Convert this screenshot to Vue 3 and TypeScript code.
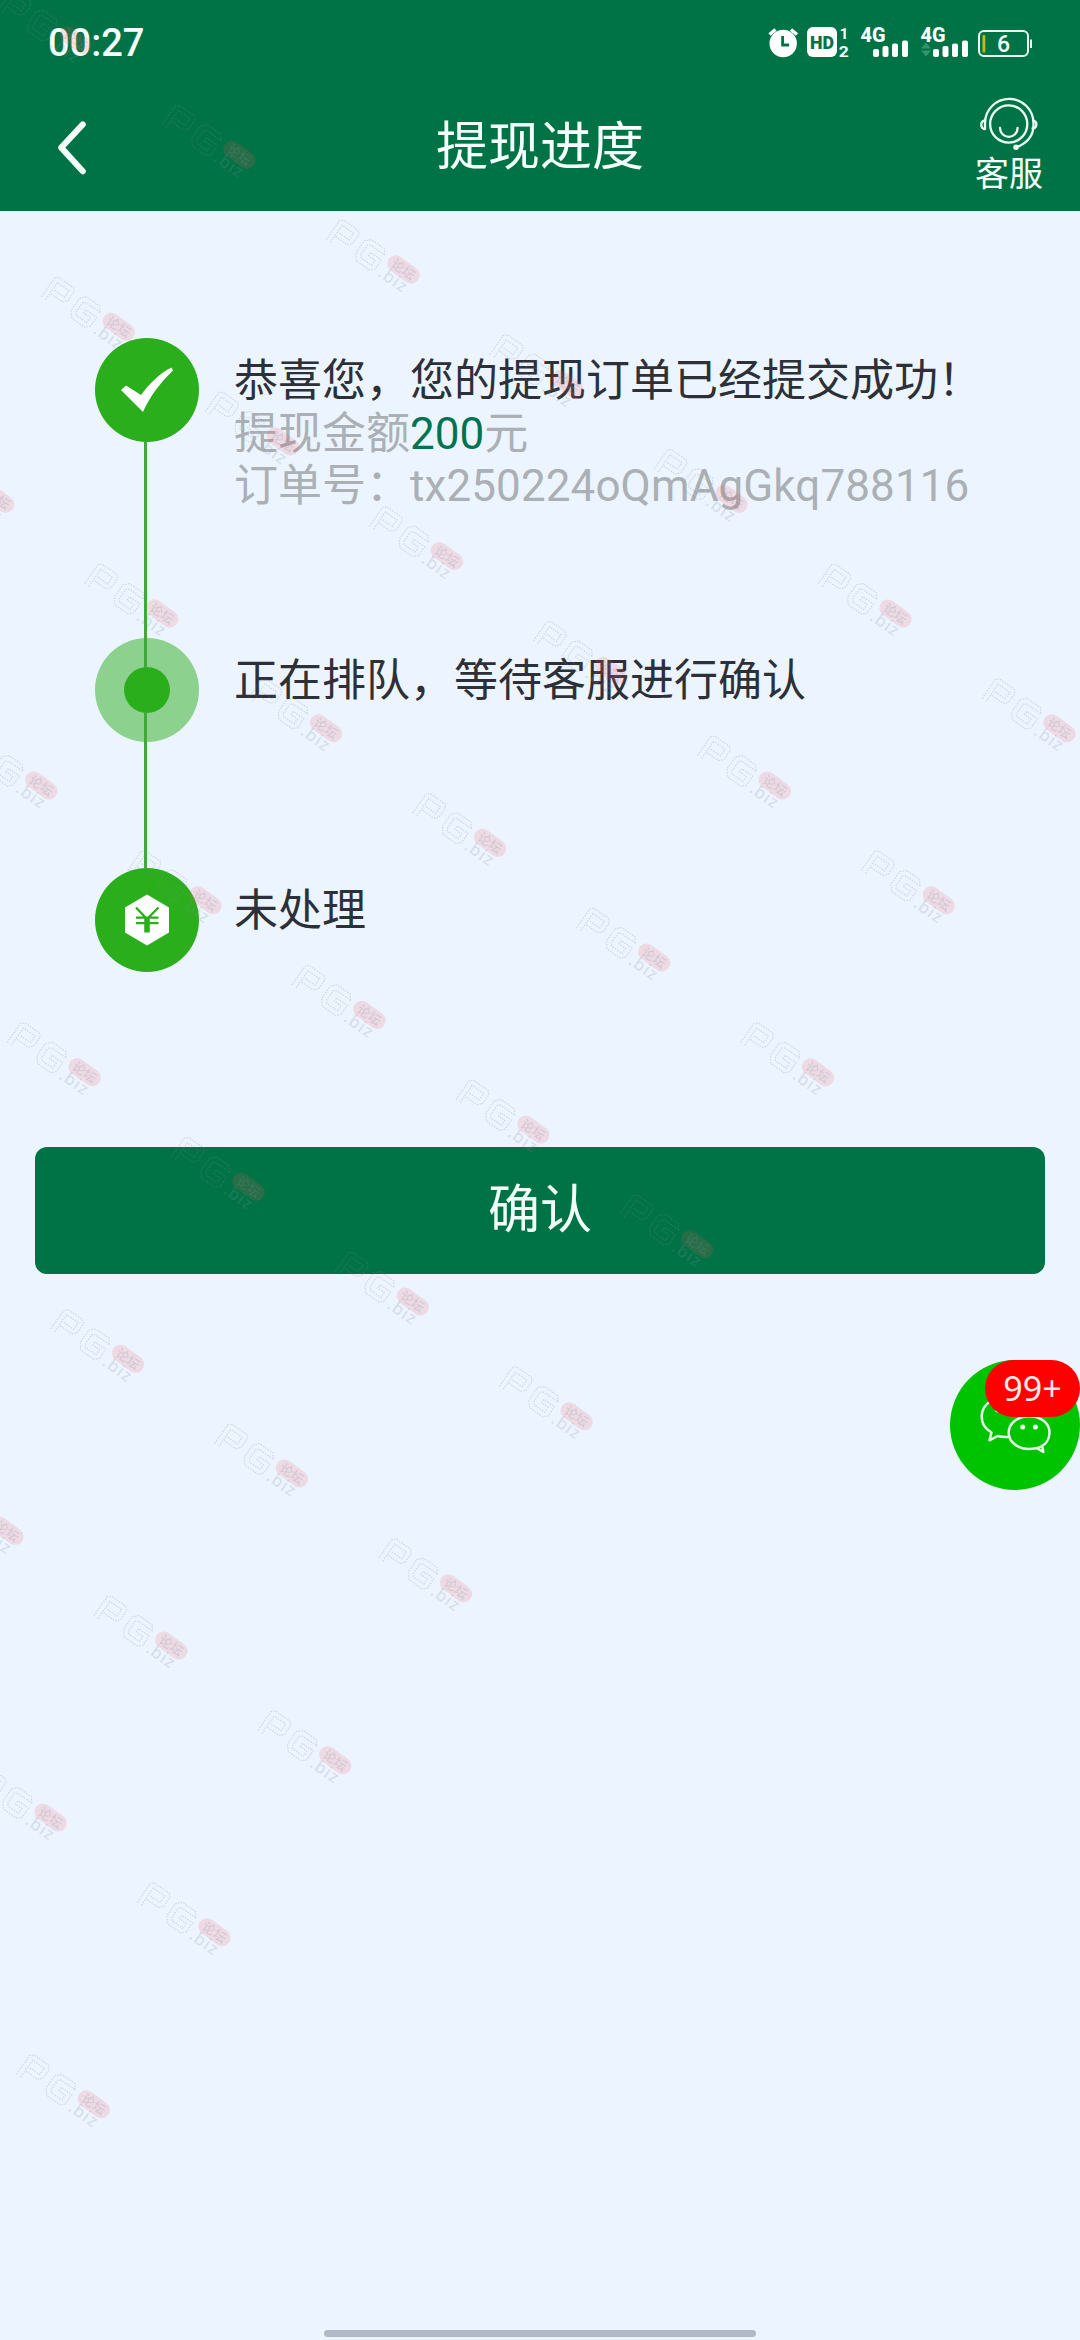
<script setup lang="ts">
interface Mark { x: number; y: number }

const title = '提现进度'
const amount = '200'
const orderNo = 'tx250224oQmAgGkq788116'
const signalBars = [
  { x: 0, h: 8 },
  { x: 9.5, h: 11 },
  { x: 19, h: 13.5 },
  { x: 29, h: 16.5 },
]

// Each row of the diagonal watermark: first and last column index
const rows: [number, number][] = [
  [0, 6], [0, 5], [-1, 4], [-1, 3], [-1, 2], [-1, 1], [-2, 0], [-2, -1], [-2, -2],
]
const marks: Mark[] = rows.flatMap(([from, to], j) =>
  Array.from({ length: to - from + 1 }, (_, k) => ({
    x: 13.8 + (from + k) * 164 + j * 43.3,
    y: -10.5 + (from + k) * 114.7 + j * 286.7,
  })),
)
</script>

<template>
  <div class="page">
    <header class="header">
      <div class="status">
        <span class="clock">00:27</span>
        <svg class="status-icons" width="270" height="36" viewBox="766 25 270 36">
          <g fill="#fff">
            <circle cx="783.2" cy="43.5" r="13.7" />
            <path d="M769.5 34.5l6-5M791 29.5l6 5" stroke="#fff" stroke-width="3.4" />
            <path d="M782.6 36v9h6.5" fill="none" stroke="#007346" stroke-width="2.8" />
            <rect x="807" y="27" width="30" height="30" rx="6" />
            <text x="822" y="49" class="hd" text-anchor="middle" textLength="24" lengthAdjust="spacingAndGlyphs">HD</text>
            <text x="844" y="38.5" class="sim" text-anchor="middle">1</text>
            <text x="843.7" y="56.5" class="sim" text-anchor="middle" textLength="10" lengthAdjust="spacingAndGlyphs">2</text>
            <g v-for="n in [0, 60]" :key="n" :transform="`translate(${n} 0)`">
              <text x="860.5" y="41.5" class="net" textLength="25" lengthAdjust="spacingAndGlyphs">4G</text>
              <rect v-for="b in signalBars" :key="b.x" :x="873 + b.x" :y="57 - b.h" width="6" :height="b.h" rx="2" />
            </g>
          </g>
          <path d="M921 48.5l5-6 5 6zM921 50.5l5 6 5-6z" fill="#31946a" />
          <rect x="979" y="31" width="49" height="25" rx="5" fill="none" stroke="#e8fff2" stroke-width="2" />
          <path d="M1031 39.5v8.5" stroke="#e8fff2" stroke-width="2" />
          <rect x="982.5" y="35" width="2.8" height="17.5" rx="1" fill="#c9b70a" />
          <text x="1003.5" y="52" class="battery" text-anchor="middle">6</text>
        </svg>
      </div>
      <nav class="nav">
        <svg class="back" width="36" height="60" viewBox="0 0 36 60">
          <path d="M28.8 6.4L7.2 29.6 28.8 53.2" fill="none" stroke="#f4fff9" stroke-width="6" stroke-linecap="round" stroke-linejoin="round" />
        </svg>
        <h1 class="title">{{ title }}</h1>
        <div class="service">
          <svg width="60" height="56" viewBox="979 96 60 56" fill="none" stroke="#eafff5" stroke-width="2.3" stroke-linecap="round">
            <circle cx="1008.7" cy="124" r="18.6" />
            <path d="M1000 128a8.800 8.800 0 0 0 17.600 0" />
            <path d="M985 129V123a24.200 24 0 0 1 48.500 0v2c0 11-7 18.500-17.500 22.500" />
            <path d="M985 120.500c-5 0-5 8.500 0 8.500M1033.500 120.500c4 1 4 7.500-1 8" />
            <circle cx="1016" cy="147.300" r="1.600" fill="#eafff5" />
          </svg>
          <span>客服</span>
        </div>
      </nav>
    </header>

    <main>
      <ol class="steps">
        <li class="step submitted">
          <svg class="dot" width="104" height="104" viewBox="0 0 104 104">
            <circle cx="52" cy="52" r="52" fill="#2bae1c" />
            <path d="M26 52l5-4.500L46 57C54 46 65 35 76.500 29.500L78 32.500C66 44 55 58 48 74z" fill="#fff" />
          </svg>
          <div class="text">
            <p>恭喜您，您的提现订单已经提交成功！</p>
            <p class="muted">提现金额<b>{{ amount }}</b>元</p>
            <p class="muted">订单号：<span class="order">{{ orderNo }}</span></p>
          </div>
        </li>
        <li class="step queued">
          <svg class="dot" width="104" height="104" viewBox="0 0 104 104">
            <circle cx="52" cy="52" r="52" fill="#2bae1c" fill-opacity=".5" />
            <circle cx="52" cy="52" r="23" fill="#2bae1c" />
          </svg>
          <div class="text"><p>正在排队，等待客服进行确认</p></div>
        </li>
        <li class="step">
          <svg class="dot" width="104" height="104" viewBox="0 0 104 104">
            <circle cx="52" cy="52" r="52" fill="#2bae1c" />
            <path d="M52 26.500l22 13v25L52 77.500l-22-13v-25z" fill="#fff" />
            <path d="M41 39.500L52 51l11.500-11.500M41 49.600h22.500M41 55.200h22.500" fill="none" stroke="#2bae1c" stroke-width="2.300" />
            <path d="M52 50v14.500" stroke="#2bae1c" stroke-width="5.500" />
          </svg>
          <div class="text"><p>未处理</p></div>
        </li>
      </ol>
      <button class="confirm" type="button">确认</button>
    </main>

    <aside class="chat">
      <svg width="130" height="130" viewBox="0 0 130 130" fill="none" stroke="#e6ffe6" stroke-width="2.500" stroke-linejoin="round">
        <path d="M41 41C29 48 28 65 41.500 72.500L39.500 80.300 47.500 76Q53 77.500 60 76.800" />
        <path d="M85.500 88.500C97 86 99.500 78 99.500 72.500 99.500 63 90.500 56.300 79 56.300S58.700 63.500 58.700 72.700 68 89 79 89Q83 89 86.500 88L93.300 92 92 84.500" />
        <g fill="#e6ffe6" stroke="none">
          <circle cx="72.700" cy="67" r="2.500" />
          <circle cx="85.400" cy="67" r="2.500" />
          <circle cx="47.500" cy="50" r="2.500" />
        </g>
      </svg>
      <span class="badge">99+</span>
    </aside>

    <div class="home-bar"></div>

    <svg class="watermark" width="1080" height="2340" viewBox="0 0 1080 2340" aria-hidden="true">
      <g v-for="(m, i) in marks" :key="i" :transform="`translate(${m.x} ${m.y}) rotate(35)`">
        <g fill="none" stroke="#8a8a9a" stroke-opacity=".28" stroke-width="1.200" stroke-dasharray="1.600 1.200">
          <path d="M-1 26V3L2 0H20L23 3V14L19 18H5M4 26V5H18V13H5" />
          <path d="M56 5L52 0H36L31 5V20L36 26H52L56 22V11H43V15H51V21H38L36 18V7L39 5H56" />
        </g>
        <text x="61" y="26" class="wm-biz">.biz</text>
        <rect x="61.500" y="-2.500" width="36" height="17" rx="8.500" transform="rotate(1 79 6)" fill="#f0505a" fill-opacity=".16" />
        <text x="79.500" y="11" class="wm-forum" text-anchor="middle">论坛</text>
      </g>
    </svg>
  </div>
</template>

<style>
body {
  margin: 0;
  background: #ecf5ff;
}
</style>

<style scoped>
.page {
  position: relative;
  width: 1080px;
  height: 2340px;
  overflow: hidden;
  background: #ecf5ff;
  color: #2d3036;
  font-family: Roboto, "Noto Sans CJK SC", sans-serif;
}
.header {
  height: 211px;
  background: #007346;
  color: #f6fffb;
}
.status {
  display: flex;
  justify-content: space-between;
  box-sizing: border-box;
  height: 86px;
  padding: 25px 44px 0 48px;
}
.clock {
  font-size: 38px;
  font-weight: 500;
  line-height: 36px;
}
.hd {
  font: 900 19px Roboto, sans-serif;
  fill: #007346;
}
.sim {
  font: 700 15px Roboto, sans-serif;
}
.net {
  font: 800 19.5px Roboto, sans-serif;
}
.battery {
  font: 500 23px Roboto, sans-serif;
  fill: #f4fff9;
}
.nav {
  display: grid;
  grid-template-columns: 200px 1fr 200px;
  height: 125px;
}
.back {
  margin: 32px 0 0 54px;
}
.title {
  margin: 23px 0 0;
  font-size: 52px;
  font-weight: 400;
  line-height: 78px;
  text-align: center;
}
.service {
  display: flex;
  flex-direction: column;
  align-items: center;
  width: 80px;
  margin: 10px 0 0 89px;
  justify-self: start;
  font-size: 34px;
  line-height: 44px;
}
.service span {
  white-space: nowrap;
}
.steps {
  margin: 0;
  padding: 127px 0 0 95px;
  list-style: none;
}
.step {
  position: relative;
  display: flex;
  gap: 35px;
  height: 104px;
}
.submitted {
  height: 300px;
}
.queued {
  height: 230px;
}
.submitted::after,
.queued::after {
  content: "";
  position: absolute;
  z-index: 1;
  left: 48.5px;
  top: 103px;
  width: 3px;
  height: 227px;
  background: #41a83c;
}
.queued::after {
  top: 74px;
  height: 157px;
}
.dot {
  flex: none;
}
.text {
  padding-top: 17px;
  font-size: 44px;
  line-height: 52.5px;
  white-space: nowrap;
}
.text p {
  margin: 0;
}
.text .muted {
  color: #abb0b5;
}
.text b {
  color: #007350;
  font-weight: 400;
}
.order {
  letter-spacing: 0.1px;
}
.confirm {
  display: block;
  width: 1010px;
  height: 127px;
  margin: 175px auto 0;
  padding: 0;
  border: 0;
  border-radius: 12px;
  background: #007346;
  color: #f2fff9;
  font: 400 52px/1 Roboto, "Noto Sans CJK SC", sans-serif;
}
.chat {
  position: absolute;
  top: 1360px;
  right: 0;
  width: 130px;
  height: 130px;
  border-radius: 50%;
  background: #00c300;
}
.badge {
  position: absolute;
  top: 0;
  right: 0;
  width: 95px;
  height: 57px;
  border-radius: 29px;
  background: #f00;
  color: #ffeaea;
  font: 400 34px/56px "Noto Sans", sans-serif;
  text-align: center;
}
.home-bar {
  position: absolute;
  bottom: 3px;
  left: 324px;
  width: 432px;
  height: 7px;
  border-radius: 4px;
  background: #b2b9c6;
}
.watermark {
  position: absolute;
  inset: 0;
  pointer-events: none;
}
.wm-biz {
  font: 500 17px "Noto Sans", sans-serif;
  letter-spacing: 1px;
  fill: #8a8a9a;
  fill-opacity: 0.22;
}
.wm-forum {
  font: 500 13px "Noto Sans CJK SC", sans-serif;
  fill: #7d8f9c;
  fill-opacity: 0.24;
}
</style>
